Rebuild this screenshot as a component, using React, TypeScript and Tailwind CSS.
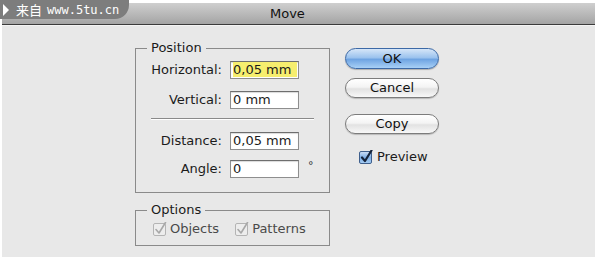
import React from "react";

function Field({ label, value, highlight, suffix }: { label: string; value: string; highlight?: boolean; suffix?: string }) {
  return (
    <div className="flex items-center h-[17px]">
      <span className="w-[87px] text-right pr-[1px]">{label}</span>
      <div className="ml-[7px] w-[69px] h-[18px] bg-white border border-[#8e8e8e] border-t-[#6e6e6e] shadow-[inset_0_1px_1px_rgba(0,0,0,0.15)] flex items-center pl-[2px]">
        <span className={highlight ? "bg-[#f6ee6e] pr-[6px] leading-[15px]" : "leading-[15px]"}>{value}</span>
      </div>
      {suffix && <span className="ml-[9px] -mt-[4px] text-[11px] text-[#333]">{suffix}</span>}
    </div>
  );
}

function AquaButton({ label, primary }: { label: string; primary?: boolean }) {
  return (
    <button
      className={
        primary
          ? "w-[94px] h-[21px] rounded-full border border-[#3c69a6] bg-[linear-gradient(#d6e6f8,#9cc3ee_45%,#6fa4e2_55%,#a8d0f6)] text-[13px] leading-[19px] text-[#111] shadow-[0_1px_1px_rgba(0,0,0,0.25)]"
          : "w-[94px] h-[20px] rounded-full border border-[#7c7c7c] bg-[linear-gradient(#ffffff,#f4f4f4_45%,#e2e2e2_55%,#f8f8f8)] text-[13px] leading-[18px] text-[#111] shadow-[0_1px_1px_rgba(0,0,0,0.2)]"
      }
    >
      {label}
    </button>
  );
}

function Check({ disabled }: { disabled?: boolean }) {
  return (
    <svg width="14" height="14" viewBox="0 0 14 14">
      <defs>
        <linearGradient id="aq" x1="0" y1="0" x2="0" y2="1">
          <stop offset="0" stopColor="#cfe0f6" />
          <stop offset="0.5" stopColor="#7eaee6" />
          <stop offset="1" stopColor="#a6cdf3" />
        </linearGradient>
      </defs>
      <rect
        x="0.5"
        y="1.5"
        width="12"
        height="12"
        rx="1.5"
        fill={disabled ? "#ededed" : "url(#aq)"}
        stroke={disabled ? "#b4b4b4" : "#3f5f8c"}
      />
      <path
        d="M3 7.5 L6 11 L12.5 0.5"
        fill="none"
        stroke={disabled ? "#a8a8a8" : "#15233a"}
        strokeWidth={disabled ? 1.6 : 2.2}
        strokeLinecap="round"
        strokeLinejoin="round"
      />
    </svg>
  );
}

export default function App() {
  return (
    <div className="relative w-[599px] h-[266px] bg-white overflow-hidden text-[13px] text-[#1b1b1b]" style={{ fontFamily: '"DejaVu Sans", sans-serif' }}>
      {/* watermark tab */}
      <div className="absolute left-0 top-0 w-[129px] h-[19px] bg-[#7d7d7d] rounded-br-[14px] flex items-center text-white">
        <span className="ml-[3px] w-0 h-0 border-y-[6px] border-y-transparent border-l-[6px] border-l-white" />
        <span className="ml-[7px] text-[13px] leading-none" style={{ fontFamily: '"Noto Sans CJK SC", sans-serif' }}>来自</span>
        <span className="ml-[5px] text-[12px] leading-none" style={{ fontFamily: '"DejaVu Sans Mono", monospace' }}>www.5tu.cn</span>
      </div>

      <div className="ml-[2px] pt-[3px] w-[593px]">
        <div className="h-[22px] bg-[linear-gradient(#cfcfcf,#a4a4a4)] border-b border-[#3b3b3b] pl-[268px] leading-[22px] text-[#111]">
          Move
        </div>
        <div className="h-[232px] bg-[#e8e8e8] border-t border-[#f4f4f4] flex pl-[133px] pt-[15px]">
          <div className="flex flex-col w-[195px]">
            <fieldset className="border border-[#8a8a8a] h-[152px] px-0">
              <legend className="ml-[11px] px-[4px] leading-[14px]">Position</legend>
              <div className="flex flex-col mt-[6px]">
                <Field label="Horizontal:" value="0,05 mm" highlight />
                <div className="mt-[13px]">
                  <Field label="Vertical:" value="0 mm" />
                </div>
                <div className="mt-[10px] mx-[15px] h-[2px] border-t border-[#8a8a8a] border-b border-b-white" />
                <div className="mt-[12px]">
                  <Field label="Distance:" value="0,05 mm" />
                </div>
                <div className="mt-[11px]">
                  <Field label="Angle:" value="0" suffix="°" />
                </div>
              </div>
            </fieldset>
            <fieldset className="border border-[#8a8a8a] mt-[10px] h-[43px] px-0">
              <legend className="ml-[11px] px-[4px] leading-[14px]">Options</legend>
              <div className="flex items-center mt-[2px] ml-[17px] text-[#4a4a4a]">
                <Check disabled />
                <span className="ml-[3px]">Objects</span>
                <span className="ml-[16px]"><Check disabled /></span>
                <span className="ml-[3px]">Patterns</span>
              </div>
            </fieldset>
          </div>
          <div className="flex flex-col ml-[15px] pt-[7px]">
            <AquaButton label="OK" primary />
            <div className="mt-[9px]"><AquaButton label="Cancel" /></div>
            <div className="mt-[16px]"><AquaButton label="Copy" /></div>
            <div className="mt-[13px] ml-[14px] flex items-center">
              <Check />
              <span className="ml-[4px]">Preview</span>
            </div>
          </div>
        </div>
      </div>
    </div>
  );
}
